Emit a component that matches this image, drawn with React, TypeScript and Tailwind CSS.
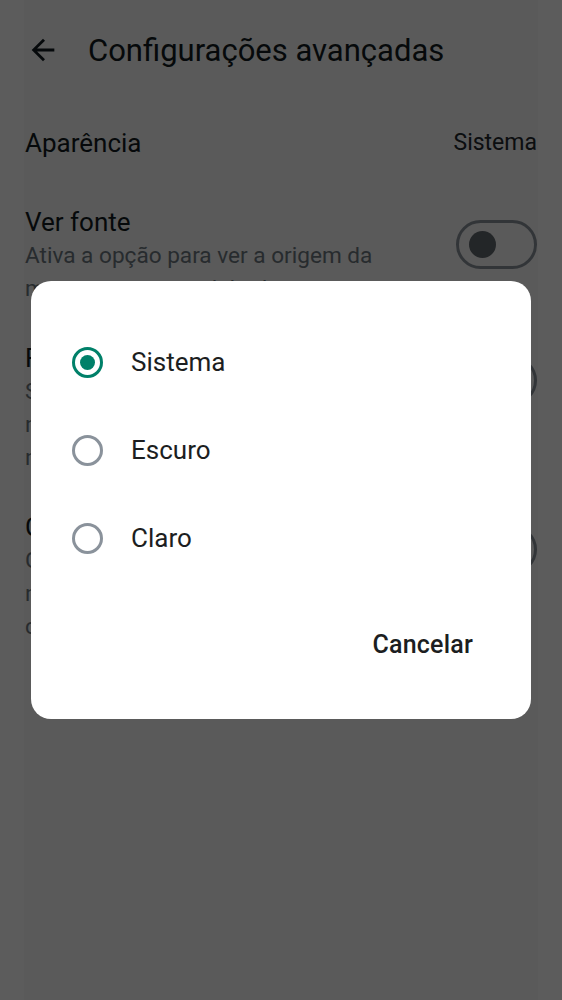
import React from "react";

function Toggle() {
  return (
    <div className="shrink-0 w-[81px] h-[49px] rounded-full border-[3px] border-[#8a929b] flex items-center pl-[10px]">
      <div className="w-[27px] h-[27px] rounded-full bg-[#62696f]" />
    </div>
  );
}

function ToggleRow({ title, lines }: { title: string; lines: string[] }) {
  return (
    <div className="flex items-start justify-between">
      <div className="flex flex-col">
        <div className="text-[26px] leading-[34px] text-[#111b21]">{title}</div>
        {lines.map((l, i) => (
          <div key={i} className="text-[22.6px] leading-[33px] text-[#6e7880] whitespace-nowrap">
            {l}
          </div>
        ))}
      </div>
      <div className="mt-[15px]">
        <Toggle />
      </div>
    </div>
  );
}

function Radio({ checked, label }: { checked?: boolean; label: string }) {
  return (
    <div className="h-[88px] flex items-center pl-[41px]">
      <div
        className={
          "w-[31px] h-[31px] rounded-full border-[3px] flex items-center justify-center " +
          (checked ? "border-[#008069]" : "border-[#8a929b]")
        }
      >
        {checked && <div className="w-[15px] h-[15px] rounded-full bg-[#008069]" />}
      </div>
      <span className="ml-[28px] text-[26px] text-[#1c1e21]">{label}</span>
    </div>
  );
}

export default function App() {
  return (
    <div
      className="relative w-[562px] h-[1000px] bg-white overflow-hidden"
      style={{ fontFamily: "Roboto, 'Noto Sans', sans-serif" }}
    >
      <div className="mx-[24px] h-[1000px] bg-[#f8f8f8] flex flex-col px-[1px]">
        <div className="h-[102px] flex items-center">
          <svg width="34" height="34" viewBox="0 0 24 24" className="ml-[1px] -mt-[3px]">
            <path d="M20 11H7.83l5.59-5.59L12 4l-8 8 8 8 1.41-1.41L7.83 13H20v-2z" fill="#111b21" />
          </svg>
          <span className="ml-[28px] text-[31px] text-[#111b21]">Configurações avançadas</span>
        </div>
        <div className="mt-[24px] flex items-center justify-between h-[34px]">
          <span className="text-[26px] text-[#111b21]">Aparência</span>
          <span className="text-[23px] text-[#1f272d]">Sistema</span>
        </div>
        <div className="mt-[45px] flex flex-col gap-[36px]">
          <ToggleRow title="Ver fonte" lines={["Ativa a opção para ver a origem da", "mensagem encaminhada"]} />
          <ToggleRow
            title="Filtrar mensagens"
            lines={["Silencia mensagens de contatos", "não salvos e oculta as", "notificações delas"]}
          />
          <ToggleRow
            title="Conexão segura"
            lines={["Garante que as mensagens", "não sejam enviadas sem", "criptografia ativada"]}
          />
        </div>
      </div>

      <div className="fixed inset-0 bg-black/[0.64] flex items-center justify-center">
        <div className="w-[500px] h-[438px] bg-white rounded-[20px] pt-[37px] flex flex-col">
          <Radio checked label="Sistema" />
          <Radio label="Escuro" />
          <Radio label="Claro" />
          <div className="mt-[39px] h-[48px] flex items-center justify-end pr-[58px]">
            <span className="text-[25px] font-medium text-[#1c1e21] tracking-[0.2px]">Cancelar</span>
          </div>
        </div>
      </div>
    </div>
  );
}
